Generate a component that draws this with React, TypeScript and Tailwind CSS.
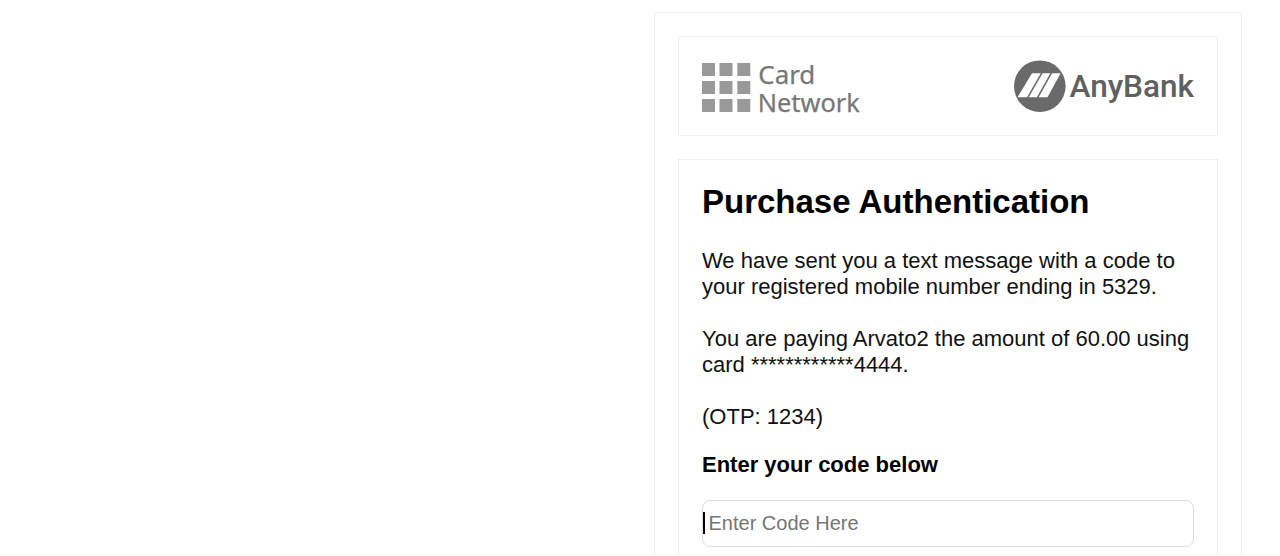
export default function App() {
  const columns = [702, 719.5, 737.3];
  const rows = [63, 81, 99];
  return (
    <div className="flex h-[556px] w-[1280px] justify-end overflow-hidden bg-white pr-[38px] pt-3 font-['Liberation_Sans',Arial,sans-serif] text-black">
      <main className="flex h-[700px] w-[588px] flex-col gap-[23px] border border-[#eee] px-[23px] pt-[23px]">
        <header className="flex h-[100px] w-[540px] shrink-0 items-start justify-between border border-[#eee] px-[23px] pt-[23px]">
          <svg width="160" height="54" viewBox="702 60 160 54" overflow="visible" role="img" aria-label="Card Network">
            {rows.map((y) =>
              columns.map((x) => <rect key={`${x}-${y}`} x={x} y={y} width="13" height="13" fill="#999" />)
            )}
            <text x="758.3" y="84.3" fontFamily="Noto Sans, sans-serif" fontSize="25.5" fill="#777" stroke="#777" strokeWidth="0.25" textLength="57" lengthAdjust="spacingAndGlyphs">Card</text>
            <text x="757.8" y="111.5" fontFamily="Noto Sans, sans-serif" fontSize="25" fill="#777" stroke="#777" strokeWidth="0.25" textLength="102" lengthAdjust="spacingAndGlyphs">Network</text>
          </svg>
          <svg width="180" height="54" viewBox="1014 60 180 54" overflow="visible" role="img" aria-label="AnyBank">
            <circle cx="1039.8" cy="86.2" r="25.8" fill="#6a6a6a" />
            <path d="M1017.5 97.3L1032 73.2H1040.8L1027 97.3ZM1028.8 97.3L1042.6 73.2H1050.3L1036.9 97.3ZM1038.7 97.3L1052.1 73.2H1060.6L1047.5 97.3Z" fill="#fff" />
            <text x="1069.5" y="97" fontFamily="Roboto, sans-serif" fontWeight="500" fontSize="31.5" fill="#606060" textLength="124.5" lengthAdjust="spacingAndGlyphs">AnyBank</text>
          </svg>
        </header>
        <section className="h-[600px] w-[540px] shrink-0 border border-[#eee] px-[23px] pt-[22px]">
          <h1 className="whitespace-nowrap text-[33px] font-bold leading-[39px]">Purchase Authentication</h1>
          <p className="mt-[27px] whitespace-nowrap text-[22px] leading-[26px] text-[#111]">
            We have sent you a text message with a code to<br />
            your registered mobile number ending in 5329.<br /><br />
            You are paying Arvato2 the amount of 60.00 using<br />
            card ************4444.<br /><br />
            (OTP: 1234)
          </p>
          <label htmlFor="code" className="mt-[22px] block text-[22px] font-bold leading-[26px]">Enter your code below</label>
          <div className="mt-[22px] flex h-[47px] w-[492px] items-center rounded-lg border border-[#ddd] pb-px">
            <span className="h-[22px] w-[2px] bg-black" />
            <input id="code" placeholder="Enter Code Here" className="ml-[3.5px] w-[400px] text-[20px] outline-none placeholder:text-[#757575]" />
          </div>
        </section>
      </main>
    </div>
  );
}
